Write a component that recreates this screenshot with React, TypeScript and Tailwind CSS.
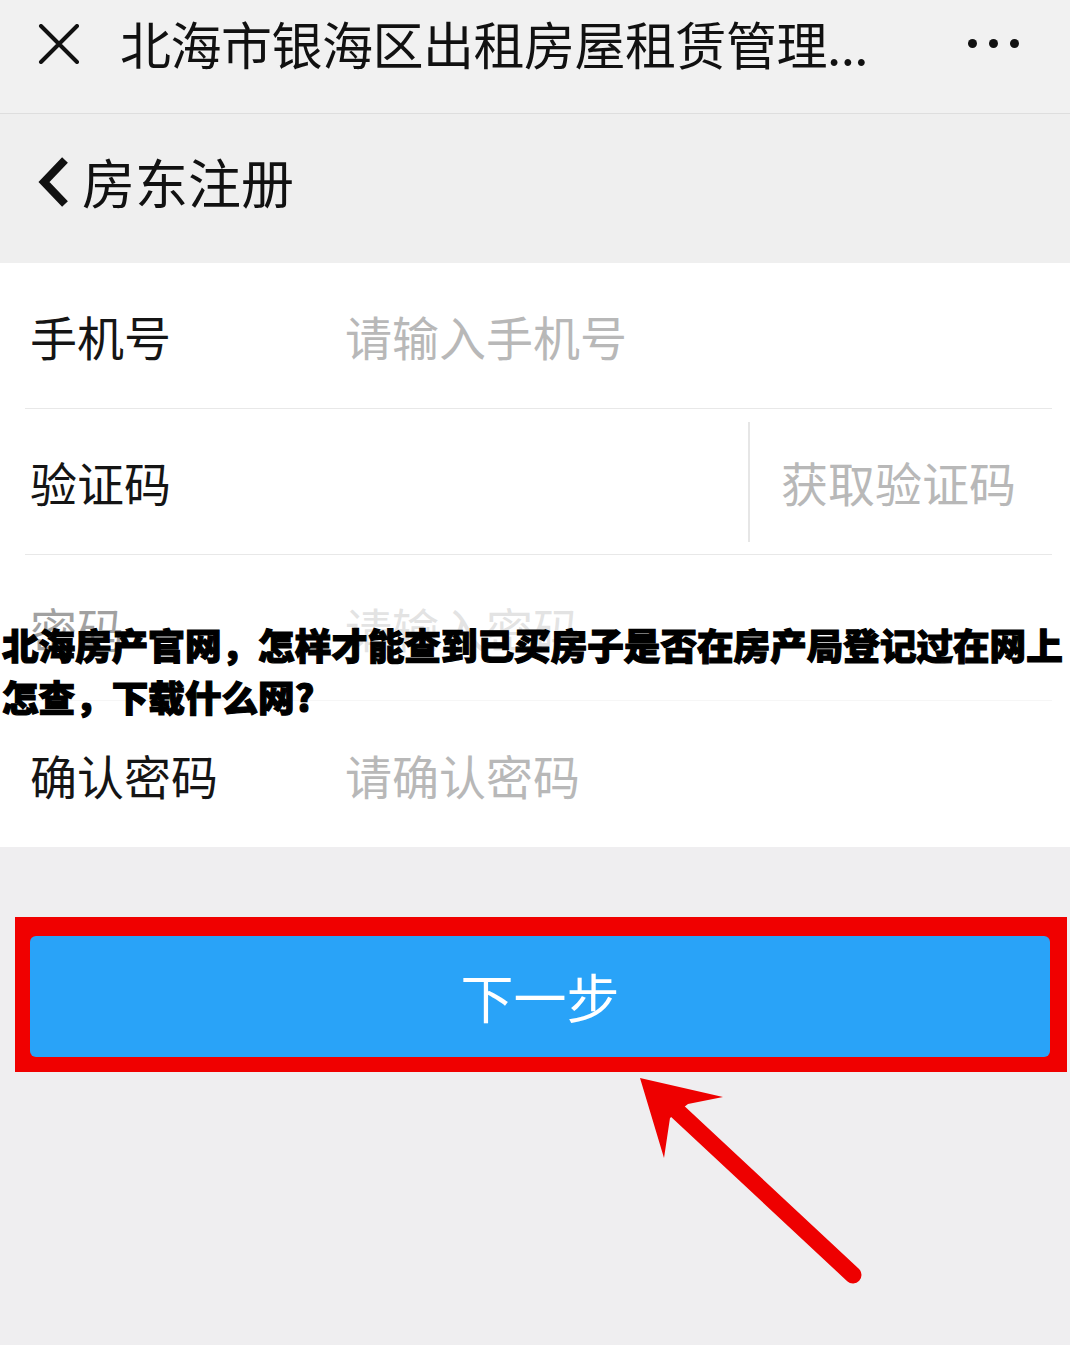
const rows = [
  { label: "手机号", placeholder: "请输入手机号" },
  { label: "验证码", placeholder: "", code: true },
  { label: "密码", placeholder: "请输入密码" },
  { label: "确认密码", placeholder: "请确认密码" },
];

const App = () => {
  return (
    <div className="relative w-[1070px] h-[1345px] overflow-hidden bg-[#efeef0] font-['Noto_Sans_CJK_SC',sans-serif]">
      {/* top bar */}
      <div className="flex h-[114px] items-center border-b border-[#dedede] bg-[#f1f1f1] pb-[26px] pl-[38px] pr-[51px]">
        <svg width="42" height="40" viewBox="0 0 42 40" className="shrink-0">
          <path d="M3 2 L39 38 M39 2 L3 38" stroke="#111" strokeWidth="4" strokeLinecap="round" />
        </svg>
        <div className="ml-[40px] text-[51px] leading-none tracking-[-0.5px] text-[#111]">北海市银海区出租房屋租赁管理...</div>
        <div className="ml-auto flex items-center gap-[12px]">
          <span className="h-[9px] w-[9px] rounded-full bg-[#111]" />
          <span className="h-[9px] w-[9px] rounded-full bg-[#111]" />
          <span className="h-[9px] w-[9px] rounded-full bg-[#111]" />
        </div>
      </div>

      {/* page title */}
      <div className="flex h-[149px] items-center bg-[#efefef] pb-[14px] pl-[38px]">
        <svg width="32" height="50" viewBox="0 0 32 50" className="shrink-0">
          <path d="M27 3 L6 25 L27 47" fill="none" stroke="#111" strokeWidth="8" />
        </svg>
        <div className="ml-[12px] text-[53px] leading-none text-[#111]">房东注册</div>
      </div>

      {/* form */}
      <div className="bg-white pl-[25px] pr-[18px]">
        {rows.map((r, i) => (
          <div
            key={r.label}
            className={
              i < rows.length - 1
                ? "flex h-[146px] items-center border-b border-[#e8e8e8] pl-[5px]"
                : "flex h-[146px] items-center pl-[5px]"
            }
          >
            <div className="w-[315px] text-[47px] leading-none text-[#151515]">{r.label}</div>
            {r.code ? (
              <div className="ml-auto flex h-[120px] items-center border-l-2 border-[#e6e6e6] pl-[31px] pr-[36px] text-[47px] leading-none text-[#b8b8b8]">
                获取验证码
              </div>
            ) : (
              <div className="text-[47px] leading-none text-[#b8b8b8]">{r.placeholder}</div>
            )}
          </div>
        ))}
      </div>

      {/* next button with red highlight */}
      <div className="ml-[15px] mt-[70px] w-[1052px] bg-[#f00000] pb-[15px] pl-[15px] pr-[17px] pt-[19px]">
        <div className="flex h-[121px] items-center justify-center rounded-[6px] bg-[#29a3f8] text-[53px] leading-none text-white">
          下一步
        </div>
      </div>

      {/* annotation arrow */}
      <svg className="pointer-events-none absolute left-0 top-0" width="1070" height="1345" viewBox="0 0 1070 1345">
        <polygon points="640,1078 723,1097 688,1104 670,1118 664,1158" fill="#ee0000" />
        <line x1="674" y1="1108" x2="853" y2="1275" stroke="#ee0000" strokeWidth="17" strokeLinecap="round" />
      </svg>

      {/* article headline over the screenshot */}
      <div className="absolute inset-x-0 top-[596px] h-[126px] bg-white/60" />
      <div className="absolute left-[2px] top-[619px] text-[36.6px] font-black leading-[52px] text-black [-webkit-text-stroke:1.2px_black]">
        北海房产官网，怎样才能查到已买房子是否在房产局登记过在网上
        <br />
        怎查，下载什么网?
      </div>
    </div>
  );
};

export default App;
